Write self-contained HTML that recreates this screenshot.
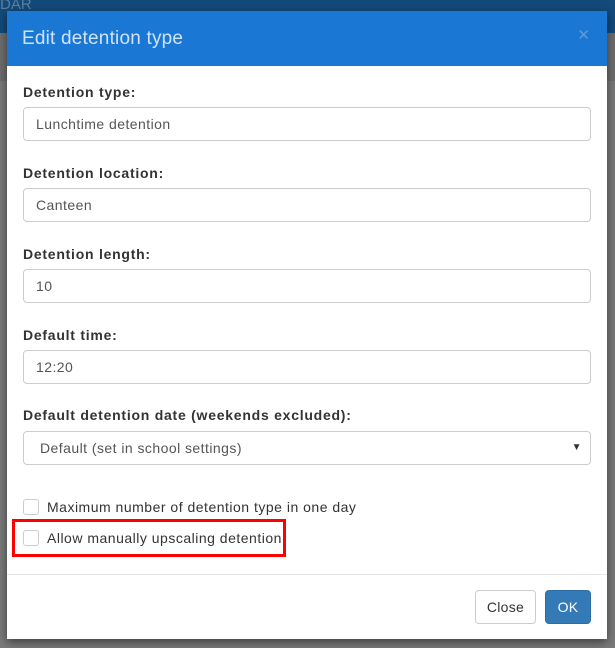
<!DOCTYPE html>
<html><head><style>
*{box-sizing:border-box}
body{margin:0;width:615px;height:648px;background:#7a7a7a;font-family:"Liberation Sans",sans-serif;position:relative;overflow:hidden}
.top{position:absolute;left:0;top:0;width:615px;height:33px;background:#134a7a}
.top span{color:#5b7fa3;font-size:15px;position:absolute;left:0;top:-4px}
.band{position:absolute;left:0;top:33px;width:615px;height:48px;background:#6e6e6e}
.modal{position:absolute;left:7px;top:11px;width:600px;height:628px;background:#fff;box-shadow:0 3px 9px rgba(0,0,0,.5)}
.hd{height:55px;background:#1a78d4;color:#cfe3f7;font-size:19px;padding:17px 15px;letter-spacing:.2px}
.x{position:absolute;right:17px;top:15px;color:#5f9bd8;font-size:15px}
.lab{position:absolute;left:16px;font-size:14px;font-weight:bold;color:#333;letter-spacing:.75px}
.in{position:absolute;left:16px;width:568px;height:34px;border:1px solid #ccc;border-radius:4px;font-size:14px;color:#555;padding:8px 12px;letter-spacing:.45px}
.cb{position:absolute;left:16px;font-size:14px;color:#333;letter-spacing:.5px}
.cb i{display:inline-block;width:16px;height:16px;border:1px solid #ccc;border-radius:3px;vertical-align:-3px;margin-right:8px}
.red{position:absolute;left:5px;top:508px;width:274px;height:38px;border:3px solid #f00}
.ft{position:absolute;left:0;top:563px;width:600px;border-top:1px solid #e5e5e5}
.btn{position:absolute;top:579px;height:34px;border-radius:4px;font-size:14px;text-align:center;line-height:32px;letter-spacing:.3px}
</style></head><body>
<div class="top"><span>DAR</span></div>
<div class="band"></div>
<div class="modal">
<div class="hd">Edit detention type</div><div class="x">✕</div>
<div class="lab" style="top:73px">Detention type:</div>
<div class="in" style="top:96px">Lunchtime detention</div>
<div class="lab" style="top:154px">Detention location:</div>
<div class="in" style="top:177px">Canteen</div>
<div class="lab" style="top:235px">Detention length:</div>
<div class="in" style="top:258px">10</div>
<div class="lab" style="top:316px">Default time:</div>
<div class="in" style="top:339px">12:20</div>
<div class="lab" style="top:396px">Default detention date (weekends excluded):</div>
<div class="in" style="top:420px;padding-left:16px">Default (set in school settings)<span style="position:absolute;right:8px;font-size:10px;top:10px;color:#333">▼</span></div>
<div class="cb" style="top:488px"><i></i>Maximum number of detention type in one day</div>
<div class="cb" style="top:519px"><i></i>Allow manually upscaling detention</div>
<div class="red"></div>
<div class="ft"></div>
<div class="btn" style="left:468px;width:61px;border:1px solid #ccc;color:#333">Close</div>
<div class="btn" style="left:538px;width:46px;background:#337ab7;color:#fff;border:1px solid #2e6da4">OK</div>
</div>
</body></html>
